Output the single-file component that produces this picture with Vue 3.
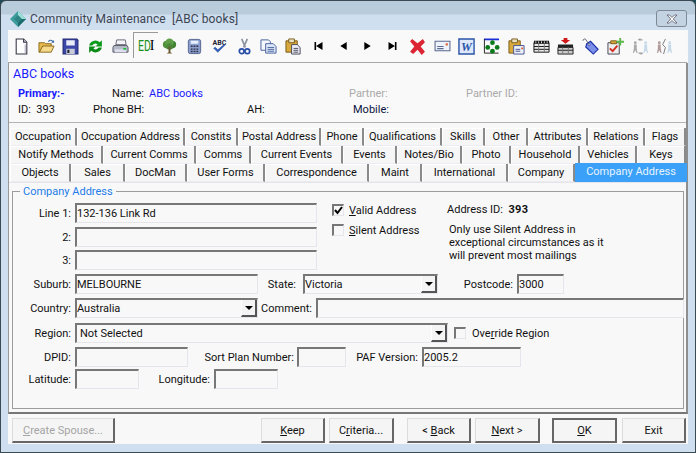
<script setup>
const rows = [
  [['Occupation', 67], ['Occupation Address', 108], ['Constits', 53], ['Postal Address', 83], ['Phone', 43], ['Qualifications', 78], ['Skills', 43], ['Other', 43], ['Attributes', 60], ['Relations', 57], ['Flags', 41]],
  [['Notify Methods', 93], ['Current Comms', 93], ['Comms', 55], ['Current Events', 92], ['Events', 54], ['Notes/Bio', 65], ['Photo', 49], ['Household', 69], ['Vehicles', 57], ['Keys', 49]],
  [['Objects', 61], ['Sales', 54], ['DocMan', 62], ['User Forms', 78], ['Correspondence', 104], ['Maint', 53], ['International', 86], ['Company', 67]]
]
</script>

<template>
  <div class="window">
    <div class="titlebar">
      <svg class="logo" width="18" height="18" viewBox="0 0 18 18">
        <path d="M9 1 17 9 9 17 1 9Z" fill="#3f9c9c" />
        <path d="M9 1 17 9 9 9Z" fill="#9fe0d8" />
        <path d="M9 9 17 9 9 17Z" fill="#1c6a6c" />
        <path d="M5 9 9 5 13 9 9 13Z" fill="#2f8585" />
      </svg>
      <span class="title">Community Maintenance&nbsp; [ABC books]</span>
      <button class="close">
        <svg width="14" height="10" viewBox="0 0 14 10"><path d="M2 1h2.500L7 3.500 9.500 1H12L8.300 5 12 9H9.500L7 6.500 4.500 9H2L5.700 5Z" fill="#fff" stroke="#556" stroke-width=".8" /></svg>
      </button>
    </div>

    <div class="client">
      <div class="toolbar">
        <span class="tool">
          <svg viewBox="0 0 16 16"><path d="M3 1h7l3 3v11H3Z" fill="#fff" stroke="#334" /><path d="M10 1v3h3" fill="#ccd" stroke="#334" /><path d="M11 6v8h1V6Z" fill="#aab" /></svg>
        </span>
        <span class="tool">
          <svg viewBox="0 0 18 16"><path d="M1 4h6l1 1h6v3H5L2 14H1Z" fill="#e8b94c" stroke="#8a6a20" /><path d="M1.500 14 5 7.500h12L14 14Z" fill="#f6d98a" stroke="#8a6a20" /><path d="M11 3c1-2 3-2 4-1l1 1" fill="none" stroke="#3a6aa8" stroke-width="1.200" /><path d="M17 1v3h-3Z" fill="#3a6aa8" /></svg>
        </span>
        <span class="tool">
          <svg viewBox="0 0 16 16"><path d="M1 1h13l1 1v13H1Z" fill="#3b46a8" stroke="#22286e" /><path d="M4 2h8v5H4Z" fill="#e8ecf8" /><path d="M4 10h8v5H4Z" fill="#c8ccd8" /><path d="M5 11h2v3H5Z" fill="#223" /></svg>
        </span>
        <span class="tool">
          <svg viewBox="0 0 16 16"><path d="M2 7a6 5.500 0 0 1 10-3l2-2v6H8l2-2a3.500 3 0 0 0-5 1Z" fill="#0c9a1c" /><path d="M14 9a6 5.500 0 0 1-10 3l-2 2V8h6l-2 2a3.500 3 0 0 0 5-1Z" fill="#0c8a18" /></svg>
        </span>
        <span class="tool">
          <svg viewBox="0 0 18 16"><path d="M5 1h9l1 5H4Z" fill="#f4f4f8" stroke="#667" /><path d="M2 7h14l1 2v5H1V9Z" fill="#b4bcc8" stroke="#556" /><path d="M3 11h12v3H3Z" fill="#dde" /><path d="M12 9.500h3v2h-3Z" fill="#22c03a" /></svg>
        </span>
        <span class="tool raised ed"><span class="ed-text">ED</span><span class="ibeam">I</span></span>
        <span class="tool">
          <svg viewBox="0 0 18 18"><circle cx="6" cy="7" r="4" fill="#4f8f3a" /><circle cx="12" cy="7" r="4" fill="#3f7f30" /><circle cx="9" cy="5" r="4.500" fill="#5f9f48" /><circle cx="9" cy="9" r="3.500" fill="#4a8a38" /><path d="M8 9h2v6l2 1.500H6L8 15Z" fill="#6a5a30" /></svg>
        </span>
        <span class="tool">
          <svg viewBox="0 0 16 18"><rect x="1.500" y="1.500" width="13" height="15" rx="2" fill="#8ba0d0" stroke="#55648c" /><path d="M4 3h8v3H4Z" fill="#e8f0fb" /><path d="M4 8h2v1.500H4ZM7 8h2v1.500H7ZM10 8h2v1.500h-2ZM4 11h2v1.500H4ZM7 11h2v1.500H7ZM10 11h2v1.500h-2ZM4 13.500h2V15H4ZM7 13.500h2V15H7ZM10 13.500h2V15h-2Z" fill="#334" /></svg>
        </span>
        <span class="tool tool-spell">
          <span class="abc">ABC</span>
          <svg viewBox="0 0 18 12"><path d="M2 5l5 5 9-9-1-1-8 7-3-3Z" fill="#2f5fc0" stroke="#24458a" stroke-width=".6" /></svg>
        </span>
        <span class="tool">
          <svg viewBox="0 0 16 18"><path d="M5 1l4 9M11 1 7 10" stroke="#8c94a4" stroke-width="1.800" fill="none" /><circle cx="5" cy="14" r="2.500" fill="none" stroke="#2a4fa8" stroke-width="1.800" /><circle cx="11" cy="14" r="2.500" fill="none" stroke="#2a4fa8" stroke-width="1.800" /></svg>
        </span>
        <span class="tool">
          <svg viewBox="0 0 18 16"><path d="M1 1h8l2 2v9H1Z" fill="#f4f6fc" stroke="#44609c" /><path d="M6 5h8l3 3v7H6Z" fill="#dfe8f8" stroke="#44609c" /><path d="M8 9h7M8 11h7M8 13h7" stroke="#44609c" /></svg>
        </span>
        <span class="tool">
          <svg viewBox="0 0 18 18"><path d="M1 3h12v12H1Z" fill="#d8a93c" stroke="#7a5c18" /><path d="M4 1h6v4H4Z" fill="#e8e0c0" stroke="#7a5c18" /><path d="M7 7h6l3 3v7H7Z" fill="#eef1fa" stroke="#445" /><path d="M9 11h5M9 13h5M9 15h5" stroke="#445" /></svg>
        </span>
        <span class="tool nav"><svg viewBox="0 0 12 10"><path d="M1 0h2v10H1ZM11 0v10L3 5Z" /></svg></span>
        <span class="tool nav"><svg viewBox="0 0 12 10"><path d="M10 0v10L2 5Z" /></svg></span>
        <span class="tool nav"><svg viewBox="0 0 12 10"><path d="M2 0v10l8-5Z" /></svg></span>
        <span class="tool nav"><svg viewBox="0 0 12 10"><path d="M11 0H9v10h2ZM1 0v10l8-5Z" /></svg></span>
        <span class="tool">
          <svg viewBox="0 0 16 16"><path d="M1 3 3 1l5 4 5-4 2 3-4 4 4 5-3 3-4-5-4 4-3-2 4-5Z" fill="#dd2434" /></svg>
        </span>
        <span class="tool">
          <svg viewBox="0 0 16 12"><path d="M1 1h14v9H1Z" fill="#eef2fa" stroke="#5a6a90" /><path d="M3 6h6M3 8h6" stroke="#5a6a90" /><path d="M11 3h2v2h-2Z" fill="#e06030" /></svg>
        </span>
        <span class="tool">
          <svg viewBox="0 0 18 18"><path d="M1 1h16v16H1Z" fill="#dfe8fa" stroke="#2a54a8" stroke-width="1.500" /><text x="9" y="14" text-anchor="middle" class="w-glyph">W</text></svg>
        </span>
        <span class="tool">
          <svg viewBox="0 0 18 18"><path d="M1 1.500h16" stroke="#1a2fd8" stroke-width="2" /><path d="M1.500 1v15h15" fill="none" stroke="#222" /><circle cx="10" cy="5" r="2.500" fill="#0a7a18" /><circle cx="5" cy="10" r="2.500" fill="#0a7a18" /><circle cx="15" cy="10" r="2.500" fill="#0a7a18" /><circle cx="10" cy="14" r="2.500" fill="#0a7a18" /></svg>
        </span>
        <span class="tool">
          <svg viewBox="0 0 18 18"><path d="M1 3h12v13H1Z" fill="#d8a93c" stroke="#7a5c18" /><path d="M4 1h6v4H4Z" fill="#e8e0c0" stroke="#7a5c18" /><path d="M6 8h11v9H6Z" fill="#eef2fa" stroke="#44508c" /><path d="M8 12h5M8 14h5" stroke="#44508c" /><path d="M14 10h2v2h-2Z" fill="#e06030" /></svg>
        </span>
        <span class="tool">
          <svg viewBox="0 0 18 14"><path d="M1 3h16v10H1Z" fill="#e8e8e8" stroke="#111" /><path d="M1 1h16v3H1Z" fill="#111" /><path d="M3 1.500v2M6 1.500v2M9 1.500v2M12 1.500v2M15 1.500v2" stroke="#ddd" /><path d="M1 7h16M1 10h16" stroke="#111" /><path d="M6 4v9M12 4v9" stroke="#777" /></svg>
        </span>
        <span class="tool">
          <svg viewBox="0 0 18 18"><path d="M7 0h4v2h3l-5 4-5-4h3Z" fill="#d01818" /><path d="M1 7h16v3H1Z" fill="#222" /><path d="M1 10h16v7H1Z" fill="#ccc" stroke="#222" /><path d="M1 13h16" stroke="#222" /><path d="M6 10v7M12 10v7" stroke="#777" /></svg>
        </span>
        <span class="tool">
          <svg viewBox="0 0 18 18"><path d="M5 6 9 3.500 17 12 12 17 4 9.500Z" fill="#7b8ee8" stroke="#1a2fa8" stroke-width="1.200" /><circle cx="7.500" cy="7" r="1.100" fill="#fff" stroke="#1a2fa8" stroke-width=".6" /><path d="M1 3c0-2 2-2.500 3-1.500L7.500 7" fill="none" stroke="#667" /></svg>
        </span>
        <span class="tool">
          <svg viewBox="0 0 18 18"><path d="M1 5h12v12H1Z" fill="#eee" stroke="#445" /><path d="M4 3h6v3H4Z" fill="#d8a93c" stroke="#7a5c18" /><path d="M3 11l3 3 5-6" fill="none" stroke="#d03020" stroke-width="2" /><path d="M13 0h2v3h3v2h-3v3h-2V5h-3V3h3Z" fill="#5cb84a" /></svg>
        </span>
        <span class="tool">
          <svg viewBox="0 0 18 18"><circle cx="3.500" cy="5" r="1.500" fill="#aaa" /><path d="M2 7h3v4l1 5H5l-1.500-3L2 16H1l1-5Z" fill="#aaa" /><circle cx="14.500" cy="5" r="1.500" fill="#c4d8ea" /><path d="M13 7h3v4l1 5h-1l-1.500-3L13 16h-1l1-5Z" fill="#c4d8ea" /><path d="M11 2H7l1.500-1.500M7 16h4l-1.500 1.500" fill="none" stroke="#777" /></svg>
        </span>
        <span class="tool">
          <svg viewBox="0 0 18 18"><circle cx="3.500" cy="5" r="1.500" fill="#b09a9a" /><path d="M2 7h3v4l1 5H5l-1.500-3L2 16H1l1-5Z" fill="#b09a9a" /><circle cx="14.500" cy="5" r="1.500" fill="#c4d8ea" /><path d="M13 7h3v4l1 5h-1l-1.500-3L13 16h-1l1-5Z" fill="#c4d8ea" /><path d="M10 1 7 7l3 3-2 7" fill="none" stroke="#777" /></svg>
        </span>
      </div>

      <div class="body">
        <div class="summary">
          <div class="sum-name">ABC books</div>
          <div class="sum-row row-a">
            <b class="primary">Primary:-</b>
            <span class="name-lbl">Name:</span>
            <span class="name-val">ABC books</span>
            <span class="partner">Partner:</span>
            <span class="partner-id">Partner ID:</span>
          </div>
          <div class="sum-row">
            <span class="id-lbl">ID:&nbsp; 393</span>
            <span class="bh">Phone BH:</span>
            <span class="ah">AH:</span>
            <span class="mobile">Mobile:</span>
          </div>
        </div>

        <div class="tabs">
          <div v-for="(row, i) in rows" :key="i" class="tab-row">
            <div v-for="t in row" :key="t[0]" class="tab" :style="{ width: t[1] + 'px' }">{{ t[0] }}</div>
            <div v-if="i === 2" class="tab active">Company Address</div>
          </div>
        </div>

        <div class="page">
          <div class="group">
            <div class="legend">Company Address</div>
            <div class="form-top">
              <div class="lines">
                <div class="frow"><label class="lbl w-l">Line 1:</label><div class="edit w-line">132-136 Link Rd</div></div>
                <div class="frow mb3"><label class="lbl w-l">2:</label><div class="edit w-line"></div></div>
                <div class="frow"><label class="lbl w-l">3:</label><div class="edit w-line"></div></div>
              </div>
              <div class="checks">
                <div class="chk-row"><span class="chk"><svg viewBox="0 0 9 9" width="9" height="9"><path d="M1 4l2.500 3L8 1" fill="none" stroke="#000" stroke-width="2" /></svg></span><span><u>V</u>alid Address</span></div>
                <div class="chk-row"><span class="chk"></span><span><u>S</u>ilent Address</span></div>
              </div>
              <div class="info">
                <div class="addr-id">Address ID:&nbsp; <b>393</b></div>
                <div class="note">Only use Silent Address in<br />exceptional circumstances as it<br />will prevent most mailings</div>
              </div>
            </div>
            <div class="frow">
              <label class="lbl w-l">Suburb:</label><div class="edit w-suburb">MELBOURNE</div>
              <label class="lbl state-lbl">State:</label>
              <div class="edit combo w-state">Victoria<span class="drop"><i></i></span></div>
              <label class="lbl post-lbl">Postcode:</label><div class="edit w-post">3000</div>
            </div>
            <div class="frow mb5">
              <label class="lbl w-l">Country:</label>
              <div class="edit combo w-suburb">Australia<span class="drop"><i></i></span></div>
              <label class="lbl comment-lbl">Comment:</label><div class="edit comment"></div>
            </div>
            <div class="frow">
              <label class="lbl w-l">Region:</label>
              <div class="edit combo w-region">Not Selected<span class="drop"><i></i></span></div>
              <span class="chk over-chk"></span><span>Ove<u>r</u>ride Region</span>
            </div>
            <div class="frow mb2">
              <label class="lbl w-l">DPID:</label><div class="edit w-dpid"></div>
              <label class="lbl sort-lbl">Sort Plan Number:</label><div class="edit w-sort"></div>
              <label class="lbl paf-lbl">PAF Version:</label><div class="edit w-paf">2005.2</div>
            </div>
            <div class="frow">
              <label class="lbl w-l">Latitude:</label><div class="edit w-lat"></div>
              <label class="lbl lon-lbl">Longitude:</label><div class="edit w-lat"></div>
            </div>
          </div>
        </div>
      </div>

      <div class="footer">
        <button class="btn spouse" disabled><u>C</u>reate Spouse...</button>
        <span class="spacer"></span>
        <button class="btn keep"><u>K</u>eep</button>
        <button class="btn crit">C<u>r</u>iteria...</button>
        <button class="btn back">&lt; <u>B</u>ack</button>
        <button class="btn next"><u>N</u>ext &gt;</button>
        <button class="btn ok"><u>O</u>K</button>
        <button class="btn exit">Exit</button>
      </div>
    </div>
  </div>
</template>

<style scoped>
.window {
  width: 696px;
  height: 453px;
  box-sizing: border-box;
  border: 1px solid #3c4a52;
  border-radius: 6px 6px 0 0;
  background: linear-gradient(#b9ccdc 0, #b9ccdc 13px, #cfdff0 14px);
  padding: 0 7px 8px;
  font-family: Roboto, "Liberation Sans", Arial, sans-serif;
  font-size: 11px;
  color: #111;
  display: flex;
  flex-direction: column;
  overflow: hidden;
}
.titlebar {
  height: 29px;
  flex: none;
  display: flex;
  align-items: flex-start;
  gap: 3px;
  margin-left: 1px;
}
.logo { flex: none; margin-top: 9px; }
.title {
  font-size: 12px;
  letter-spacing: .1px;
  line-height: 16px;
  margin-top: 10px;
  color: #3c4450;
}
.close {
  margin-left: auto;
  margin-top: 9px;
  margin-right: 1px;
  width: 31px;
  height: 17px;
  padding: 0;
  border: 1px solid #7d8a96;
  border-radius: 3px;
  background: #c4d3e2;
  display: flex;
  align-items: center;
  justify-content: center;
}
.client {
  flex: 1;
  background: #f8f8f8;
  display: flex;
  flex-direction: column;
  min-height: 0;
}
.toolbar {
  height: 33px;
  flex: none;
  display: flex;
  align-items: center;
  padding-left: 1px;
  border-bottom: 1px solid #a9a9a9;
  margin-right: 1px;
  background: #f9f9f9;
  box-sizing: border-box;
}
.tool {
  width: 24.750px;
  height: 24px;
  flex: none;
  display: flex;
  align-items: center;
  justify-content: center;
  position: relative;
}
.tool svg { width: 17px; height: 17px; }
.tool.nav svg { width: 11px; height: 8px; fill: #000; }
.raised {
  height: 26px;
  margin-top: -2px;
  border-top: 1px solid #999;
  border-left: 1px solid #999;
  box-sizing: border-box;
}
.ed { justify-content: flex-start; padding-left: 4px; }
.ed-text { color: #1a9020; font-size: 15px; transform: scaleX(.7); transform-origin: left; width: 12px; }
.ibeam { color: #000; font-size: 14px; font-family: "Liberation Serif", serif; }
.tool-spell { flex-direction: column; }
.tool-spell svg { width: 15px; height: 10px; margin-top: -3px; }
.abc { font-size: 7px; font-weight: bold; color: #223; line-height: 8px; }
.w-glyph { font: italic bold 13px "Liberation Serif", serif; fill: #2a54a8; }

.body {
  flex: 1;
  min-height: 0;
  display: flex;
  flex-direction: column;
  border-left: 1px solid #999;
  border-right: 2px solid #8e8e8e;
  border-bottom: 2px solid #777;
}
.summary {
  flex: none;
  height: 60px;
  box-sizing: border-box;
  padding: 3px 0 0 4px;
  background: #f9f9f9;
  border-bottom: 1px solid #b4b4b4;
}
.sum-name { color: #1a1aff; font-size: 12.500px; line-height: 16px; }
.sum-row { display: flex; line-height: 16px; }
.row-a { margin-top: 4px; }
.primary { color: #1a1aff; width: 94px; margin-left: 5px; }
.name-lbl { width: 37px; }
.name-val { color: #1a1aff; width: 200px; }
.partner { color: #aaa; width: 117px; }
.partner-id { color: #aaa; }
.id-lbl { width: 75px; margin-left: 5px; }
.bh { width: 154px; }
.ah { width: 106px; }
.mobile { color: #0c1440; }

.tabs {
  flex: none;
  padding: 5px 0 0 1px;
  background: #f8f8f8;
}
.tab-row { display: flex; height: 18px; }
.tab {
  flex: none;
  box-sizing: border-box;
  height: 18px;
  line-height: 18px;
  text-align: center;
  border-right: 2px solid #8a8a8a;
  border-left: 1px solid #fff;
  border-bottom: 1px solid #ececf2;
  background: #f6f6f6;
  box-shadow: inset 0 1px 0 #fff;
  white-space: nowrap;
}
.active {
  background: #3aa0f8;
  color: #e8f4ff;
  width: 112px;
  height: 19px;
  line-height: 17px;
  margin-top: -1px;
  border: 0;
  box-shadow: none;
}

.page {
  flex: 1;
  padding: 8px 0 0 3px;
  border-top: 1px solid #e4e4ea;
  min-height: 0;
  box-sizing: border-box;
}
.group {
  position: relative;
  border: 1px solid #9c9c9c;
  box-sizing: border-box;
  width: 672px;
  height: 218px;
  padding-top: 11px;
}
.legend {
  position: absolute;
  top: -7px;
  left: 7px;
  padding: 0 3px;
  background: #f8f8f8;
  color: #1c7ce8;
  line-height: 13px;
}
.form-top { display: flex; height: 71px; }
.lines { width: 303px; flex: none; }
.frow { display: flex; align-items: center; height: 20px; margin-bottom: 4px; }
.mb2 { margin-bottom: 2px; }
.mb3 { margin-bottom: 3px; }
.mb5 { margin-bottom: 5px; }
.lbl { text-align: right; flex: none; white-space: nowrap; }
.w-l { width: 58px; margin-right: 4px; }
.edit {
  box-sizing: border-box;
  height: 20px;
  flex: none;
  border: 1px solid #e4e6ec;
  border-top: 2px solid #777;
  border-left: 2px solid #777;
  background: #f8f8f8;
  line-height: 17px;
  position: relative;
  white-space: nowrap;
}
.w-line { width: 242px; }
.w-suburb { width: 183px; }
.w-state { width: 135px; }
.w-post { width: 47px; }
.w-region { width: 373px; padding-left: 3px; }
.w-dpid { width: 113px; }
.w-sort { width: 49px; }
.w-paf { width: 99px; }
.w-lat { width: 64px; }
.state-lbl { width: 38px; margin-right: 7px; }
.post-lbl { width: 75px; margin-right: 4px; }
.comment-lbl { width: 54px; margin-right: 4px; }
.comment { width: 368px; }
.sort-lbl { width: 106px; margin-right: 3px; }
.paf-lbl { width: 72px; margin-right: 4px; }
.lon-lbl { width: 71px; margin-right: 4px; }
.over-chk { margin-left: 6px; margin-right: 6px; }

.drop {
  position: absolute;
  right: 0;
  top: 0;
  bottom: 0;
  width: 16px;
  background: #f4f4f4;
  border-right: 2px solid #555;
  border-bottom: 2px solid #555;
  border-left: 1px solid #fff;
  box-sizing: border-box;
  display: flex;
  align-items: center;
  justify-content: center;
}
.drop i {
  width: 0;
  height: 0;
  border-left: 4px solid transparent;
  border-right: 4px solid transparent;
  border-top: 4px solid #000;
}

.checks { width: 115px; flex: none; margin-left: 16px; }
.chk-row { display: flex; align-items: center; gap: 5px; height: 14px; margin-bottom: 6px; }
.chk {
  width: 12px;
  height: 12px;
  flex: none;
  box-sizing: border-box;
  border: 1px solid #e4e6ec;
  border-top: 2px solid #777;
  border-left: 2px solid #777;
  display: flex;
  align-items: center;
  justify-content: center;
}
.addr-id { line-height: 14px; }
.addr-id b { letter-spacing: .3px; }
.note { margin-top: 6px; margin-left: 2px; line-height: 13px; }

.footer {
  flex: none;
  height: 30px;
  display: flex;
  align-items: flex-start;
  padding: 4px 2px 0 4px;
  box-sizing: border-box;
}
.spacer { flex: 1; }
.btn {
  height: 25px;
  box-sizing: border-box;
  font: inherit;
  color: #111;
  background: #f5f5f5;
  border: 1px solid #dcdcdc;
  border-right: 2px solid #666;
  border-bottom: 2px solid #666;
  padding: 0;
  flex: none;
}
.spouse { width: 103px; color: #a4a4a4; }
.keep { width: 64px; }
.crit { width: 65px; margin-left: 4px; }
.back { width: 64px; margin-left: 13px; }
.next { width: 65px; margin-left: 4px; }
.ok { width: 65px; margin-left: 12px; border: 2px solid #666; }
.exit { width: 64px; margin-left: 5px; }
</style>

<style>
html, body { margin: 0; background: #1e4a55; }
</style>
